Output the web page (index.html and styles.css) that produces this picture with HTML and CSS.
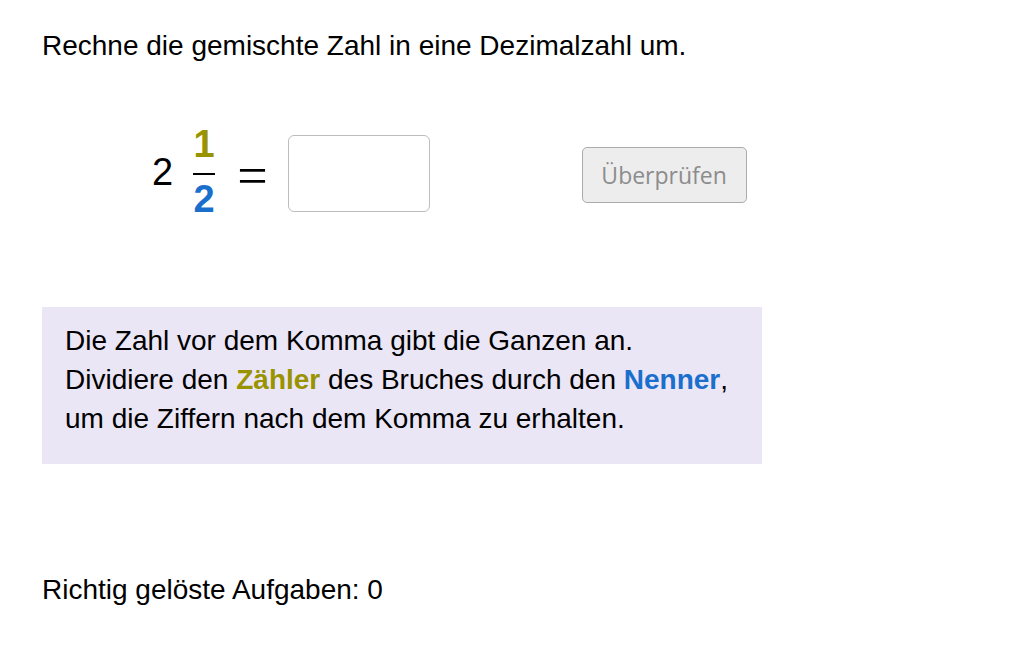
FILE: index.html
```html
<!DOCTYPE html>
<html lang="de">
<head>
<meta charset="utf-8">
<link rel="stylesheet" href="styles.css">
</head>
<body>
<div class="page">
  <p class="task">Rechne die gemischte Zahl in eine Dezimalzahl um.</p>
  <div class="row">
    <div class="expr">
      <span class="whole">2</span>
      <span class="frac">
        <span class="num">1</span>
        <span class="bar"></span>
        <span class="den">2</span>
      </span>
      <span class="eq">=</span>
      <input class="answer" type="text">
    </div>
    <button class="check" disabled>Überprüfen</button>
  </div>
  <div class="hint">
    <p>Die Zahl vor dem Komma gibt die Ganzen an.<br>Dividiere den <b class="z">Zähler</b> des Bruches durch den <b class="n">Nenner</b>,<br>um die Ziffern nach dem Komma zu erhalten.</p>
  </div>
  <p class="score">Richtig gelöste Aufgaben: 0</p>
</div>
</body>
</html>
```

FILE: styles.css
```css
html, body { margin: 0; padding: 0; background: #fff; }
body { font-family: "Liberation Sans", Arial, sans-serif; color: #000; }
.page { padding: 28px 0 0 42px; width: 720px; }
.task { margin: 0; font-size: 28px; line-height: 36px; }
.row { display: flex; align-items: center; margin-top: 61px; }
.expr { display: flex; align-items: center; padding-left: 110px; }
.whole { font-size: 38px; line-height: 38px; }
.frac { display: flex; flex-direction: column; align-items: center; margin-left: 20px; width: 22px; font-weight: bold; font-size: 38px; line-height: 38px; }
.num { color: #9a9300; }
.den { color: #1a6fcd; }
.bar { width: 22px; height: 2px; background: #000; margin: 10px 0 5px; }
.eq { font-family: "Liberation Serif", serif; font-size: 54px; line-height: 40px; margin-left: 22px; margin-top: 8px; }
.answer { margin-left: 20px; margin-top: 4px; width: 142px; height: 77px; box-sizing: border-box; border: 1px solid #bdbdbd; border-radius: 6px; background: #fff; }
.check { margin-left: 152px; margin-top: 7px; width: 165px; height: 56px; font-family: "Open Sans", sans-serif; font-size: 23px; color: #8c8c8c; background: #ededed; border: 1px solid #ababab; border-radius: 5px; padding: 0; }
.hint { margin-top: 89px; background: #eae6f6; padding: 14px 23px 26px; width: 720px; box-sizing: border-box; }
.hint p { margin: 0; font-size: 28px; line-height: 39px; }
.z { color: #9a9300; }
.n { color: #1a6fcd; }
.score { margin: 108px 0 0; font-size: 28px; line-height: 36px; }
```
